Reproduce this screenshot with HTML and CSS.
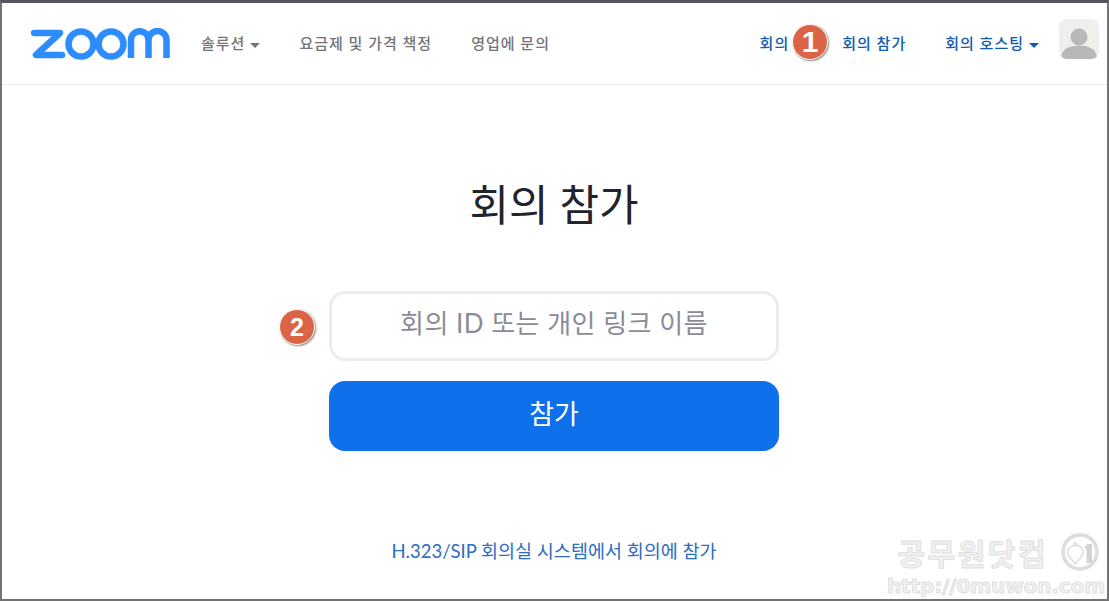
FILE: index.html
```html
<html>
<head>
    <title>회의 참가</title>
    <link rel="stylesheet" href="styles.css">
</head>
<body>
<div class="frame">
    <header class="header">
        <svg class="logo" width="140" height="32" viewBox="0 0 140 32">
            <path d="M3 5 H29 L5 27 H31" fill="none" stroke="#2d8cff" stroke-width="6.5" stroke-linejoin="round" stroke-linecap="round"/>
            <circle cx="50" cy="16" r="12.5" fill="none" stroke="#2d8cff" stroke-width="6.5"/>
            <circle cx="80" cy="16" r="12.5" fill="none" stroke="#2d8cff" stroke-width="6.5"/>
            <path d="M100 30 V12 A8.5 8.5 0 0 1 117.500 12 V30 M117.500 12 A8.500 8.500 0 0 1 135.500 12 V30" fill="none" stroke="#2d8cff" stroke-width="6.5"/>
        </svg>
        <nav class="nav">
            <a class="nav-item">솔루션<i class="caret"></i></a>
            <a class="nav-item">요금제 및 가격 책정</a>
            <a class="nav-item">영업에 문의</a>
        </nav>
        <nav class="nav nav-right">
            <a class="nav-item nav-meeting">회의</a>
            <a class="nav-item">회의 참가</a>
            <a class="nav-item">회의 호스팅<i class="caret"></i></a>
            <div class="avatar">
                <svg width="40" height="40" viewBox="0 0 40 40">
                    <circle cx="20" cy="18" r="8.500" fill="#b8b8b8"/>
                    <path d="M2 40 C2 30 10 26.500 20 26.500 C30 26.500 38 30 38 40 Z" fill="#b8b8b8"/>
                </svg>
            </div>
        </nav>
    </header>

    <main class="join">
        <h1>회의 참가</h1>
        <div class="join-input">회의 ID 또는 개인 링크 이름</div>
        <button class="join-btn">참가</button>
        <a class="sip-link">H.323/SIP 회의실 시스템에서 회의에 참가</a>
    </main>

    <!-- 블로그 표시 -->
    <span class="step step-1">1</span>
    <span class="step step-2">2</span>
    <div class="stamp">
        <div class="stamp-name">공무원닷컴
            <svg width="38" height="38" viewBox="0 0 38 38">
                <circle cx="19" cy="19" r="17" fill="none" stroke="#dcdcdc" stroke-width="3.500"/>
                <path d="M14 8 L12 12.500 L14.500 11.500 L17 12.500 Z" fill="#dcdcdc"/>
                <path d="M14.500 12.500 C9 12.500 6.500 16 6.500 19.500 C6.500 24 11 26 14.500 31 C18 26 22 24 22 19.500 C22 16 20 12.500 14.500 12.500 Z" fill="#ffffff" stroke="#dcdcdc" stroke-width="1.500"/>
                <path d="M23 15 L26.500 11 H31 V30 H25.500 V16 Z" fill="#d4d4d4"/>
            </svg>
        </div>
        <div class="stamp-url">http://0muwon.com</div>
    </div>
</div>
</body>
</html>
```

FILE: styles.css
```css
* {
    box-sizing: border-box;
}

html, body {
    margin: 0;
    height: 100%;
}

body {
    font-family: Lato, "Noto Sans CJK KR", sans-serif;
    color: #23232d;
    background: #ffffff;
}

.frame {
    position: relative;
    height: 601px;
    overflow: hidden;
    border: 2px solid #737373;
    border-top: 3px solid #55555d;
}

.header {
    display: flex;
    align-items: center;
    height: 82px;
    padding: 0 8px 0 29px;
    border-bottom: 1px solid #ececec;
}

.logo {
    flex: none;
}

.nav {
    display: flex;
    align-items: center;
    margin-left: 30px;
    margin-bottom: 2px;
    gap: 39px;
    font-size: 15px;
    letter-spacing: 1px;
    font-weight: 500;
    color: #747478;
}

.nav-right {
    margin-left: auto;
    color: #0e5baf;
}

.nav-item {
    white-space: nowrap;
}

.nav-meeting {
    margin-right: 14px;
}

.caret {
    display: inline-block;
    margin-left: 5px;
    vertical-align: middle;
    border-top: 5px solid currentColor;
    border-left: 5px solid transparent;
    border-right: 5px solid transparent;
}

.avatar {
    width: 40px;
    height: 40px;
    margin-left: -19px;
    margin-top: -8px;
    border-radius: 8px;
    overflow: hidden;
    background: #f0efeb;
}

.avatar svg {
    display: block;
}

.join {
    display: flex;
    flex-direction: column;
    align-items: center;
    padding-right: 1px;
}

.join h1 {
    margin: 92px 0 0;
    font-size: 43px;
    line-height: 56px;
    font-weight: 400;
}

.join-input {
    width: 450px;
    height: 70px;
    margin-top: 58px;
    border: 3px solid #ececec;
    border-radius: 16px;
    font-size: 26px;
    letter-spacing: 0.500px;
    line-height: 58px;
    text-align: center;
    color: #8b8b97;
}

.join-btn {
    width: 450px;
    height: 70px;
    margin-top: 20px;
    padding-bottom: 8px;
    border: 0;
    border-radius: 16px;
    background: #0e71eb;
    color: #ffffff;
    font-family: inherit;
    font-size: 27px;
}

.sip-link {
    margin-top: 86px;
    font-size: 18.500px;
    color: #2d6cc4;
}

.step {
    position: absolute;
    border-radius: 50%;
    background: #dc6446;
    color: #ffffff;
    font-family: "Liberation Sans", sans-serif;
    font-weight: 700;
    text-align: center;
    border: 1px solid #ffffff;
    box-shadow: 1px 1px 2px #8a8a8a;
}

.step-1 {
    left: 790px;
    top: 21px;
    width: 36px;
    height: 36px;
    font-size: 30px;
    line-height: 34px;
}

.step-2 {
    left: 277px;
    top: 306px;
    width: 36px;
    height: 36px;
    font-size: 25px;
    line-height: 34px;
}

.stamp {
    position: absolute;
    right: 8px;
    top: 529px;
    color: #f1f1f1;
    -webkit-text-stroke: 1px #e0e0e0;
    text-align: right;
    font-family: "Noto Sans CJK KR", sans-serif;
    font-weight: 700;
}

.stamp-name {
    display: flex;
    align-items: center;
    justify-content: flex-end;
    gap: 13px;
    font-size: 30px;
    line-height: 40px;
    letter-spacing: 2.500px;
}

.stamp-url {
    margin-top: 2px;
    margin-right: -6px;
    font-family: "DejaVu Sans", sans-serif;
    font-size: 20px;
    line-height: 24px;
    letter-spacing: -0.100px;
}
```
